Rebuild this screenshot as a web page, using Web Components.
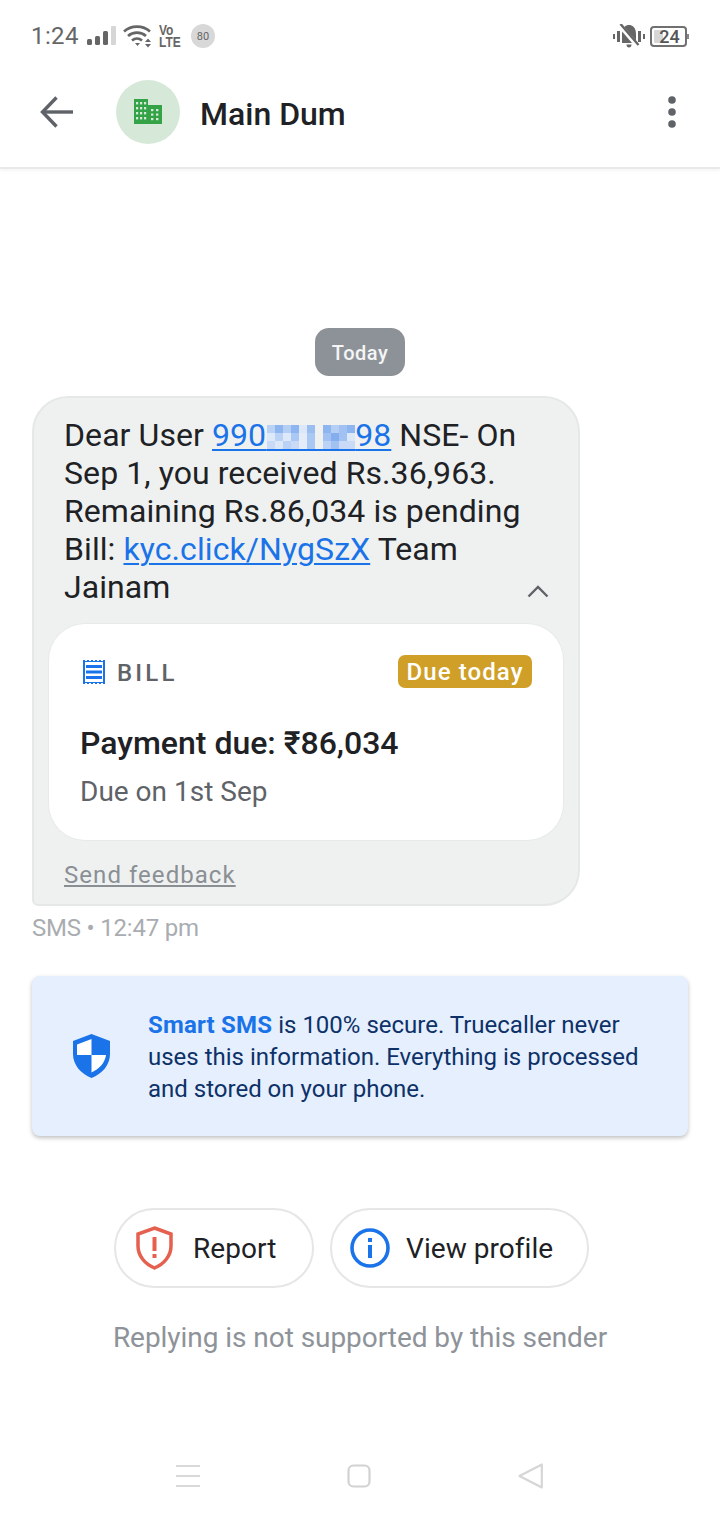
<!DOCTYPE html>
<html>
<head>
<meta charset="utf-8">
<title>Main Dum</title>
<style>
    html, body { margin: 0; padding: 0; background: #fff; }
    body { font-family: Roboto, "Liberation Sans", sans-serif; width: 720px; height: 1520px; overflow: hidden; display: flex; flex-direction: column; }
</style>
</head>
<body>
<status-bar></status-bar>
<app-bar name="Main Dum"></app-bar>
<thread-view>
    <date-chip>Today</date-chip>
    <message-bubble>
        <bill-card slot="card"></bill-card>
    </message-bubble>
    <message-meta>SMS • 12:47 pm</message-meta>
    <secure-note></secure-note>
    <action-row></action-row>
    <reply-note>Replying is not supported by this sender</reply-note>
</thread-view>
<nav-bar></nav-bar>

<script>
// cells of the blurred part of the phone number, one row per string, 8px each
const MASK_ROWS = [
    ["#b9d2f5", "#8db5ef", "#b5cff4", "#8db5ef", "#dce8f8", "#9bbef0", "", "#8db5ef", "#b5cff4", "#a0c1f1", "#8db5ef"],
    ["#dde8f8", "#b9d2f5", "#dde8f8", "#a9c8f3", "#e3ecf8", "#a9c8f3", "", "#a0c1f1", "#85aeee", "#a0c1f1", "#dce8f8"],
    ["#c8daf6", "#dce8f8", "#b9d2f5", "#c8daf6", "#e3ecf8", "#a9c8f3", "", "#b9d2f5", "#a0c1f1", "#c8daf6", "#c8daf6"]
];

function maskCells() {
    return MASK_ROWS.map((row, y) => row.map((c, x) => c ? `<rect x="${x * 8}" y="${y * 8}" width="8" height="8" fill="${c}"/>` : "").join("")).join("");
}

// window squares of the building icon
function buildingWindows() {
    let out = "";
    [2, 6, 10].forEach(x => [3, 8, 13, 18].forEach(y => out += `<rect x="${x}" y="${y}" width="2.200" height="2.400"/>`));
    [17, 22].forEach(x => [10, 14.500, 19].forEach(y => out += `<rect x="${x}" y="${y}" width="2.400" height="2.200"/>`));
    return out;
}

class StatusBar extends HTMLElement {
    constructor() {
        super();
        this.attachShadow({mode: 'open'}).innerHTML = `
        <style>
            :host { display: flex; align-items: center; height: 72px; padding: 0 33px 0 31px; box-sizing: border-box; color: #666; flex: none; }
            .time { font-size: 24px; letter-spacing: .4px; margin-right: 8px; }
            svg { display: block; }
            .badge { width: 24px; height: 24px; border-radius: 50%; background: #d8d8d8; font-size: 11px; display: flex; align-items: center; justify-content: center; margin-left: 10px; color: #666; }
            .lte { display: flex; flex-direction: column; font-size: 15px; font-weight: 700; line-height: 12px; margin-left: 6px; width: 22px; color: #666; font-family: "Liberation Sans", sans-serif; transform: scaleX(.8); transform-origin: left center; }
            .spacer { flex: 1; }
            .batt { position: relative; z-index: 0; width: 37px; height: 21px; border: 2px solid #707070; border-radius: 4px; box-sizing: border-box; font-size: 18px; font-weight: 500; display: flex; align-items: center; justify-content: center; margin-left: 5px; color: #555; padding-left: 2px; }
            .batt::before { content: ""; position: absolute; left: 2px; top: 2px; bottom: 2px; width: 9px; background: #d6d6d6; border-radius: 1px; z-index: -1; }
            .batt::after { content: ""; position: absolute; right: -4px; top: 6px; width: 2px; height: 5px; background: #888; }
        </style>
        <span class="time">1:24</span>
        <svg width="30" height="20" viewBox="0 0 30 20" fill="#666">
            <rect x="0" y="13" width="5" height="6" rx="1.500"/><rect x="8" y="10" width="5" height="9" rx="1.500"/><rect x="16" y="5" width="5" height="14" rx="1.500"/><rect x="24" y="0" width="5" height="19" rx="1" fill="#d6d6d6"/>
        </svg>
        <svg width="30" height="24" viewBox="0 0 30 24" fill="none" stroke="#666" stroke-width="2.600" style="margin-left:6px">
            <path d="M1 7.500C8 1 20 1 27 7.500"/><path d="M5 12C10 7.500 18 7.500 23 12"/><path d="M9 16.500C12 14 16 14 19 16.500"/>
            <path d="M12 19h5l-2.500 3z" fill="#666" stroke="none"/><path d="M22 18h6l-3-3.500zM22 20h6l-3 3.500z" fill="#666" stroke="none"/>
        </svg>
        <div class="lte"><span>Vo</span><span>LTE</span></div>
        <div class="badge">80</div>
        <div class="spacer"></div>
        <svg width="32" height="24" viewBox="0 0 32 24" fill="#666">
            <rect x="0" y="10" width="2" height="5"/><rect x="4" y="7" width="3" height="11"/><rect x="25" y="7" width="3" height="11"/><rect x="30" y="10" width="2" height="5"/>
            <path d="M9 19V10C9 3 13 1 16 1s7 2 7 9v9zM13.500 20.500h5c0 2-1 3-2.500 3s-2.500-1-2.500-3z"/>
            <path d="M7 1.500L25 22.500" stroke="#fff" stroke-width="4.500"/><path d="M7.500 0L25.500 21" stroke="#666" stroke-width="2.400"/>
        </svg>
        <div class="batt">24</div>
        `;
    }
}

class AppBar extends HTMLElement {
    constructor() {
        super();
        this.attachShadow({mode: 'open'}).innerHTML = `
        <style>
            :host { display: flex; align-items: center; height: 97px; box-sizing: border-box; padding: 0 44px 15px 40px; flex: none; border-bottom: 2px solid #e9e9e9; box-shadow: 0 2px 3px rgba(0,0,0,.04); position: relative; }
            .avatar { width: 64px; height: 64px; border-radius: 50%; background: #d6e9d8; display: flex; align-items: center; justify-content: center; margin-left: 43px; }
            .avatar svg { margin-top: -2px; }
            .name { font-size: 32px; font-weight: 500; color: #202124; margin-left: 20px; flex: 1; padding-top: 3px; }
            svg { display: block; }
        </style>
        <svg width="33" height="32" viewBox="0 0 33 32" fill="none" stroke="#5f6368" stroke-width="3.400">
            <path d="M33 16H3"/><path d="M16.500 1.500L2.500 16l14 14.500"/>
        </svg>
        <div class="avatar">
            <svg width="28" height="25" viewBox="0 0 28 25">
                <path d="M0 0h14v6h14v19H0z" fill="#34a347"/>
                <g fill="#d6e9d8">${buildingWindows()}</g>
            </svg>
        </div>
        <div class="name"></div>
        <svg width="8" height="32" viewBox="0 0 8 32" fill="#5f6368">
            <circle cx="4" cy="4" r="3.800"/><circle cx="4" cy="16" r="3.800"/><circle cx="4" cy="28" r="3.800"/>
        </svg>
        `;
        this.shadowRoot.querySelector(".name").textContent = this.getAttribute("name");
    }
}

class ThreadView extends HTMLElement {
    constructor() {
        super();
        this.attachShadow({mode: 'open'}).innerHTML = `
        <style>
            :host { display: flex; flex-direction: column; flex: 1; padding: 159px 32px 0; box-sizing: border-box; min-height: 0; }
        </style>
        <slot></slot>
        `;
    }
}

class DateChip extends HTMLElement {
    constructor() {
        super();
        this.attachShadow({mode: 'open'}).innerHTML = `
        <style>
            :host { display: block; align-self: center; width: 90px; height: 48px; line-height: 50px; text-align: center; border-radius: 14px; background: #8d9298; color: #f4f5f5; font-size: 20px; font-weight: 500; letter-spacing: .5px; margin-bottom: 20px; }
        </style>
        <slot></slot>
        `;
    }
}

class MessageBubble extends HTMLElement {
    constructor() {
        super();
        this.attachShadow({mode: 'open'}).innerHTML = `
        <style>
            :host { display: block; width: 548px; height: 510px; box-sizing: border-box; background: #eff1f1; border: 2px solid #e6e8e8; border-radius: 36px 36px 36px 6px; padding: 18px 15px 0; color: #202124; position: relative; }
            .text { font-size: 32px; line-height: 38px; padding: 0 15px; letter-spacing: .08px; }
            a { color: #1a73e8; text-decoration: underline; text-decoration-thickness: 2px; text-underline-offset: 3px; }
            .mask { position: relative; letter-spacing: .15px; }
            .mask svg { position: absolute; left: 1px; top: 9px; }
            .toggle { position: absolute; right: 29px; top: 186px; display: block; }
            .feedback { font-size: 24px; letter-spacing: 1.050px; color: #8a8f94; text-decoration: underline; text-decoration-thickness: 2px; text-underline-offset: 2px; padding: 0 15px; display: block; margin-top: 19px; line-height: 32px; }
        </style>
        <div class="text">Dear User <a href="#">990<span class="mask">&nbsp;&nbsp;&nbsp;&nbsp;&nbsp;&nbsp;&nbsp;&nbsp;&nbsp;&nbsp;&nbsp;<svg width="88" height="24" viewBox="0 0 88 24" shape-rendering="crispEdges">${maskCells()}</svg></span>98</a> NSE- On Sep 1, you received Rs.36,963. Remaining Rs.86,034 is pending Bill: <a href="#">kyc.click/NygSzX</a> Team Jainam</div>
        <svg class="toggle" width="22" height="14" viewBox="0 0 22 14" fill="none" stroke="#5f6368" stroke-width="2.400"><path d="M1.500 12.500L11 3l9.500 9.500"/></svg>
        <div style="margin-top:18px"><slot name="card"></slot></div>
        <span class="feedback">Send feedback</span>
        `;
    }
}

class BillCard extends HTMLElement {
    constructor() {
        super();
        this.attachShadow({mode: 'open'}).innerHTML = `
        <style>
            :host { display: block; width: 514px; height: 216px; box-sizing: border-box; background: #fff; border-radius: 36px; box-shadow: 0 0 0 1px #e8eaea; padding: 31px 31px 0; }
            .top { display: flex; align-items: center; height: 34px; }
            .kind { font-size: 24px; font-weight: 500; letter-spacing: 3.200px; color: #5f6368; margin-left: 12px; flex: 1; padding-top: 2px; }
            svg { display: block; margin-left: 3px; }
            .due { align-self: flex-start; background: #cf9f28; color: #fff; font-size: 24px; font-weight: 500; letter-spacing: 1.100px; height: 33px; line-height: 35px; width: 134px; box-sizing: border-box; text-align: center; border-radius: 7px; }
            .amount { font-size: 32px; font-weight: 500; color: #202124; margin-top: 34px; line-height: 40px; }
            .date { font-size: 28px; color: #5f6368; margin-top: 11px; line-height: 36px; }
        </style>
        <div class="top">
            <svg width="22" height="26" viewBox="0 0 22 26">
                <rect x="0" y="1" width="22" height="24" fill="#1a73e8"/>
                <rect x="2" y="3" width="18" height="20" fill="#fff"/>
                <path d="M3 6h16v3H3zM3 11.500h16v3H3zM3 17h16v3H3z" fill="#1a73e8"/>
                <path d="M2 0h2v2H2zM6 0h2v2H6zM10 0h2v2h-2zM14 0h2v2h-2zM18 0h2v2h-2zM2 24h2v2H2zM6 24h2v2H6zM10 24h2v2h-2zM14 24h2v2h-2zM18 24h2v2h-2z" fill="#fff"/>
            </svg>
            <span class="kind">BILL</span>
            <span class="due">Due today</span>
        </div>
        <div class="amount">Payment due: ₹86,034</div>
        <div class="date">Due on 1st Sep</div>
        `;
    }
}

class MessageMeta extends HTMLElement {
    constructor() {
        super();
        this.attachShadow({mode: 'open'}).innerHTML = `
        <style>
            :host { display: block; font-size: 24px; line-height: 30px; letter-spacing: -.2px; color: #a9adb1; margin-top: 7px; }
        </style>
        <slot></slot>
        `;
    }
}

class SecureNote extends HTMLElement {
    constructor() {
        super();
        this.attachShadow({mode: 'open'}).innerHTML = `
        <style>
            :host { display: flex; align-items: center; width: 656px; height: 160px; box-sizing: border-box; margin-top: 33px; background: #e5effd; border-radius: 8px; box-shadow: 0 2px 4px rgba(0,0,0,.25); padding: 2px 30px 0 41px; }
            svg { display: block; flex: none; margin-right: 38px; margin-top: -2px; }
            p { margin: 0; font-size: 24px; line-height: 32px; color: #0d3168; }
            b { color: #1a73e8; font-weight: 700; letter-spacing: .2px; }
        </style>
        <svg width="37" height="44" viewBox="0 0 37 44">
            <path d="M18.500 0L37 7v13c0 11-8 20-18.500 24C8 40 0 31 0 20V7z" fill="#1a73e8"/>
            <path d="M18.500 5L4 10.500V21h14.500zM18.500 21v17.500C26 35 32 29 33 21z" fill="#fff"/>
        </svg>
        <p><b>Smart SMS</b> is 100% secure. Truecaller never uses this information. Everything is processed and stored on your phone.</p>
        `;
    }
}

class ActionRow extends HTMLElement {
    constructor() {
        super();
        this.attachShadow({mode: 'open'}).innerHTML = `
        <style>
            :host { display: flex; gap: 16px; margin: 72px 0 0 82px; }
            .pill { display: flex; align-items: center; height: 80px; box-sizing: border-box; border: 2px solid #e6e6e6; border-radius: 40px; font-size: 28px; letter-spacing: .05px; color: #202124; }
            .report { width: 200px; padding-left: 20px; gap: 20px; }
            .profile { width: 259px; padding-left: 18px; gap: 16px; }
            svg { display: block; flex: none; }
        </style>
        <div class="pill report">
            <svg width="37" height="44" viewBox="0 0 37 44" fill="none">
                <path d="M18.500 2L35 8v12c0 10-7 18-16.500 22C9 38 2 30 2 20V8z" stroke="#e5604f" stroke-width="3.500"/>
                <path d="M16.500 11h4v14h-4zM16.500 28h4v4h-4z" fill="#e5604f"/>
            </svg>
            <span>Report</span>
        </div>
        <div class="pill profile">
            <svg width="40" height="40" viewBox="0 0 40 40" fill="none">
                <circle cx="20" cy="20" r="18" stroke="#1a73e8" stroke-width="3.600"/>
                <path d="M18 17h4v13h-4zM18 10h4v4h-4z" fill="#1a73e8"/>
            </svg>
            <span>View profile</span>
        </div>
        `;
    }
}

class ReplyNote extends HTMLElement {
    constructor() {
        super();
        this.attachShadow({mode: 'open'}).innerHTML = `
        <style>
            :host { display: block; text-align: center; font-size: 28px; line-height: 36px; letter-spacing: -.05px; color: #8e9399; margin-top: 32px; width: 656px; }
        </style>
        <slot></slot>
        `;
    }
}

class NavBar extends HTMLElement {
    constructor() {
        super();
        this.attachShadow({mode: 'open'}).innerHTML = `
        <style>
            :host { display: flex; align-items: center; height: 88px; flex: none; padding: 0 177px 0 176px; justify-content: space-between; }
            svg { display: block; }
        </style>
        <svg width="24" height="22" viewBox="0 0 24 22" fill="none" stroke="#d9d9d9" stroke-width="2"><path d="M0 1h24M0 11h24M0 21h24"/></svg>
        <svg width="24" height="24" viewBox="0 0 24 24" fill="none" stroke="#d2d2d2" stroke-width="2.200"><rect x="1.500" y="1.500" width="21" height="21" rx="5"/></svg>
        <svg width="25" height="26" viewBox="0 0 25 26" fill="none" stroke="#d6d6d6" stroke-width="2.200" stroke-linejoin="round"><path d="M23.800 1.500v23L1.500 13z"/></svg>
        `;
    }
}

customElements.define("status-bar", StatusBar);
customElements.define("app-bar", AppBar);
customElements.define("thread-view", ThreadView);
customElements.define("date-chip", DateChip);
customElements.define("message-bubble", MessageBubble);
customElements.define("bill-card", BillCard);
customElements.define("message-meta", MessageMeta);
customElements.define("secure-note", SecureNote);
customElements.define("action-row", ActionRow);
customElements.define("reply-note", ReplyNote);
customElements.define("nav-bar", NavBar);
</script>
</body>
</html>
